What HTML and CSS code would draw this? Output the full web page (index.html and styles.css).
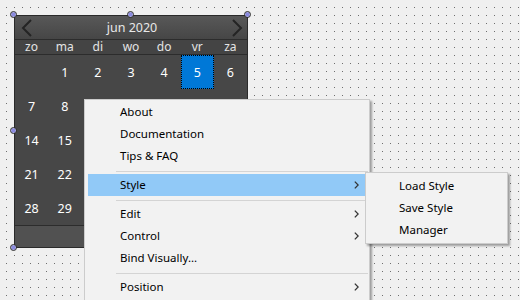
FILE: index.html
```html
<!DOCTYPE html>
<html>
<head>
<meta charset="utf-8">
<link rel="stylesheet" href="styles.css">
</head>
<body>
<div class="canvas">
  <div class="calendar">
    <div class="cal-head">
      <svg class="nav" width="12" height="18" viewBox="0 0 12 18"><path d="M10 1 L2 9 L10 17" fill="none" stroke="#242424" stroke-width="2"/></svg>
      <span class="title">jun 2020</span>
      <svg class="nav" width="12" height="18" viewBox="0 0 12 18"><path d="M2 1 L10 9 L2 17" fill="none" stroke="#242424" stroke-width="2"/></svg>
    </div>
    <div class="cal-days">
      <span>zo</span><span>ma</span><span>di</span><span>wo</span><span>do</span><span>vr</span><span>za</span>
    </div>
    <div class="cal-grid">
      <span></span><span>1</span><span>2</span><span>3</span><span>4</span><span class="sel">5</span><span>6</span>
      <span>7</span><span>8</span><span>9</span><span>10</span><span>11</span><span>12</span><span>13</span>
      <span>14</span><span>15</span><span>16</span><span>17</span><span>18</span><span>19</span><span>20</span>
      <span>21</span><span>22</span><span>23</span><span>24</span><span>25</span><span>26</span><span>27</span>
      <span>28</span><span>29</span><span>30</span><span></span><span></span><span></span><span></span>
    </div>
    <div class="cal-foot"></div>
    <i class="handle h-tl"></i><i class="handle h-tc"></i><i class="handle h-tr"></i>
    <i class="handle h-ml"></i><i class="handle h-mr"></i>
    <i class="handle h-bl"></i><i class="handle h-bc"></i><i class="handle h-br"></i>
  </div>

  <div class="menu">
    <div class="item">About</div>
    <div class="item">Documentation</div>
    <div class="item">Tips &amp; FAQ</div>
    <div class="sep"></div>
    <div class="item active">Style<svg class="arrow" width="5" height="8" viewBox="0 0 5 8"><path d="M0.8 0.6 L4.2 4 L0.8 7.4" fill="none" stroke="#333" stroke-width="1.3"/></svg></div>
    <div class="sep"></div>
    <div class="item">Edit<svg class="arrow" width="5" height="8" viewBox="0 0 5 8"><path d="M0.8 0.6 L4.2 4 L0.8 7.4" fill="none" stroke="#333" stroke-width="1.3"/></svg></div>
    <div class="item">Control<svg class="arrow" width="5" height="8" viewBox="0 0 5 8"><path d="M0.8 0.6 L4.2 4 L0.8 7.4" fill="none" stroke="#333" stroke-width="1.3"/></svg></div>
    <div class="item">Bind Visually...</div>
    <div class="sep"></div>
    <div class="item">Position<svg class="arrow" width="5" height="8" viewBox="0 0 5 8"><path d="M0.8 0.6 L4.2 4 L0.8 7.4" fill="none" stroke="#333" stroke-width="1.3"/></svg></div>
  </div>

  <div class="menu submenu">
    <div class="item">Load Style</div>
    <div class="item">Save Style</div>
    <div class="item">Manager</div>
  </div>
</div>
</body>
</html>
```
FILE: styles.css
```css
html, body {
  margin: 0;
  padding: 0;
}
body {
  width: 520px;
  height: 300px;
  overflow: hidden;
  background: conic-gradient(at 1px 1px, transparent 75%, #6e6e6e 0) 6px 7px / 8px 8px, #f0f0f0;
  font-family: "Noto Sans", "DejaVu Sans", sans-serif;
}
.canvas {
  position: relative;
  width: 520px;
  height: 300px;
}

/* calendar widget */
.calendar {
  position: absolute;
  left: 14px;
  top: 15px;
  width: 234px;
  height: 233px;
  box-sizing: border-box;
  border: 1px solid #2a2a2a;
  background: #474747;
  display: flex;
  flex-direction: column;
}
.cal-head {
  height: 23px;
  flex: none;
  border-bottom: 1px solid #2c2c2c;
  background: linear-gradient(#585858, #464646);
  display: flex;
  align-items: center;
  justify-content: space-between;
  padding: 0 4px 0 6px;
}
.nav {
  display: block;
}
.title {
  color: #e8e8e8;
  font-size: 12.5px;
  line-height: 23px;
}
.cal-days {
  height: 14px;
  flex: none;
  border-bottom: 1px solid #2c2c2c;
  background: #444444;
  display: grid;
  grid-template-columns: repeat(7, 1fr);
  color: #e4e4e4;
  font-size: 12px;
  line-height: 14px;
  text-align: center;
}
.cal-grid {
  height: 170px;
  flex: none;
  display: grid;
  grid-template-columns: repeat(7, 1fr);
  grid-template-rows: repeat(5, 1fr);
  color: #ffffff;
  font-size: 12.5px;
}
.cal-grid span {
  display: flex;
  align-items: center;
  justify-content: center;
}
.cal-grid .sel {
  background: #0078d7;
  outline: 1px dotted #000;
  outline-offset: -1px;
}
.cal-foot {
  flex: 1;
  border-top: 1px solid #2c2c2c;
  background: #515151;
}

/* selection handles */
.handle {
  position: absolute;
  width: 7px;
  height: 7px;
  box-sizing: border-box;
  border: 1px solid #2e2e2e;
  border-radius: 50%;
  background: radial-gradient(circle at 50% 50%, #8a8ae0 0, #8a8ae0 1.5px, #d4d4f4 3px);
}
.h-tl { left: -5px; top: -5px; }
.h-tc { left: 112px; top: -5px; }
.h-tr { left: 229px; top: -5px; }
.h-ml { left: -5px; top: 111px; }
.h-mr { left: 229px; top: 111px; }
.h-bl { left: -5px; top: 228px; }
.h-bc { left: 112px; top: 228px; }
.h-br { left: 229px; top: 228px; }

/* context menu */
.menu {
  position: absolute;
  left: 84px;
  top: 99px;
  width: 286px;
  box-sizing: border-box;
  border: 1px solid #cccccc;
  background: #f2f2f2;
  padding: 1px 3px 2px;
  box-shadow: 2px 2px 2px rgba(0, 0, 0, 0.35);
  font-size: 11.5px;
  color: #000;
}
.item {
  height: 22px;
  line-height: 22px;
  padding-left: 32px;
  padding-right: 7px;
  display: flex;
  align-items: center;
  justify-content: space-between;
}
.item.active {
  background: #91c9f7;
}
.arrow {
  display: block;
}
.sep {
  height: 1px;
  margin: 4px -2px 2px 28px;
  background: #d4d4d4;
}
.submenu {
  left: 365px;
  top: 172px;
  width: 143px;
  padding: 2px 3px 2px;
}
.submenu .item {
  padding-left: 30px;
}
```
